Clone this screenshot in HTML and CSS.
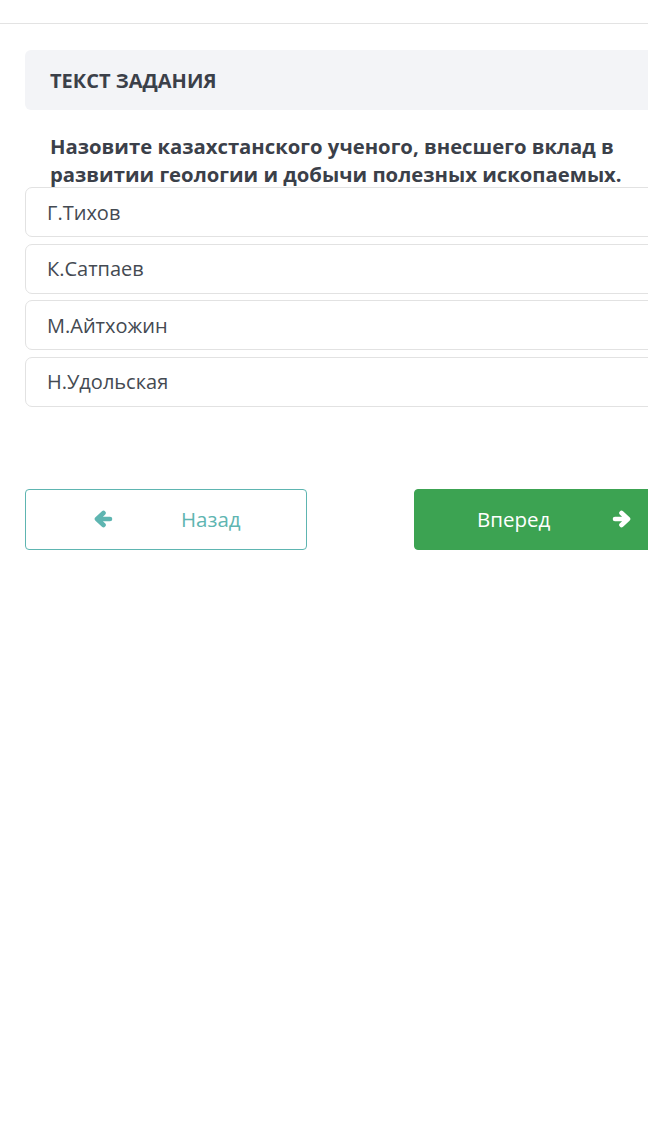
FILE: index.html
```html
<!DOCTYPE html>
<html lang="ru">
<head>
  <meta charset="UTF-8" />
  <meta name="viewport" content="width=device-width, initial-scale=1.0" />
  <title>Тест</title>
  <link rel="stylesheet" href="styles.css">
</head>
<body>
  <div class="topbar"></div>

  <main class="page">
    <div class="task-head">ТЕКСТ ЗАДАНИЯ</div>
    <p class="question">Назовите казахстанского ученого, внесшего вклад в развитии геологии и добычи полезных ископаемых.</p>

    <ul class="answers">
      <li class="answer">Г.Тихов</li>
      <li class="answer">К.Сатпаев</li>
      <li class="answer">М.Айтхожин</li>
      <li class="answer">Н.Удольская</li>
    </ul>

    <div class="nav">
      <button class="btn btn-back">
        <svg class="arrow" viewBox="0 0 20 18"><path d="M17 9H4M10.5 3L4 9l6.5 6"/></svg>
        <span>Назад</span>
      </button>
      <button class="btn btn-next">
        <span>Вперед</span>
        <svg class="arrow" viewBox="0 0 20 18"><path d="M3 9h13M9.5 3L16 9l-6.5 6"/></svg>
      </button>
    </div>
  </main>
</body>
</html>
```

FILE: styles.css
```css
body {
  margin: 0;
  font-family: "Open Sans", "Noto Sans", sans-serif;
  color: #3b4049;
  background: #fff;
  overflow-x: hidden;
}
.topbar {
  height: 23px;
  border-bottom: 1px solid #e3e3e3;
}
.page {
  width: 671px;
  padding: 26px 25px 0;
}
.task-head {
  background: #f3f4f7;
  border-radius: 6px;
  height: 60px;
  padding-left: 25px;
  display: flex;
  align-items: center;
  font-size: 20px;
  font-weight: 700;
  color: #3b4049;
}
.question {
  margin: 22px 0 0;
  padding-left: 25px;
  font-size: 20.3px;
  font-weight: 700;
  line-height: 28px;
  color: #3b4049;
}
.answers {
  list-style: none;
  margin: -1px 0 0;
  padding: 0;
  display: flex;
  flex-direction: column;
  gap: 6.6px;
}
.answer {
  height: 48px;
  border: 1px solid #e2e2e2;
  border-radius: 7px;
  padding-left: 21px;
  display: flex;
  align-items: center;
  font-size: 20px;
  color: #444a52;
}
.nav {
  display: flex;
  justify-content: space-between;
  margin-top: 82px;
}
.btn {
  width: 282px;
  height: 61px;
  border-radius: 4px;
  font-family: inherit;
  font-size: 20.5px;
  display: flex;
  align-items: center;
  padding: 0;
  cursor: pointer;
}
.btn .arrow {
  width: 20px;
  height: 18px;
  fill: none;
  stroke-width: 4.6;
  stroke-linecap: round;
  stroke-linejoin: round;
}
.btn-back {
  background: #fff;
  border: 1px solid #5eb5b1;
  color: #5eb5b1;
}
.btn-back .arrow {
  stroke: #5eb5b1;
  margin-left: 67px;
}
.btn-back span {
  margin-left: 68px;
}
.btn-next {
  background: #3ca352;
  border: 1px solid #3ca352;
  color: #fff;
}
.btn-next span {
  margin-left: 62px;
}
.btn-next .arrow {
  stroke: #fff;
  margin-left: 62px;
}
```
